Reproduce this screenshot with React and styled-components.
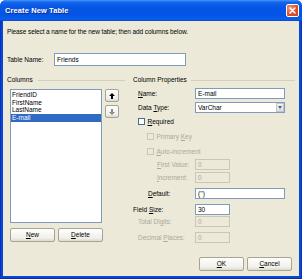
import React from "react";
import styled, { createGlobalStyle } from "styled-components";

const Global = createGlobalStyle`
  html, body { margin: 0; padding: 0; background: #fff; }
  body { font-family: "Liberation Sans", Arial, sans-serif; }
`;

const Window = styled.div`
  width: 302px;
  height: 279px;
  display: flex;
  flex-direction: column;
  background: #0846D8;
  border-radius: 6px 6px 0 0;
  overflow: hidden;
`;

const TitleBar = styled.div`
  height: 21px;
  flex: none;
  display: flex;
  align-items: center;
  justify-content: space-between;
  padding: 0 3px 0 5px;
  background: linear-gradient(to bottom, #4A96FA 0%, #1466EE 10%, #0556E4 35%, #0455E6 75%, #0A5FEE 90%, #0848D4 100%);
`;

const Title = styled.span`
  color: #fff;
  font-weight: bold;
  font-size: 7.5px;
  letter-spacing: 0.1px;
  text-shadow: 1px 1px 0 #0A2A8A;
`;

const CloseButton = styled.div`
  width: 13px;
  height: 13px;
  box-sizing: border-box;
  border: 1px solid #fff;
  border-radius: 2px;
  background: radial-gradient(circle at 30% 30%, #F29A78, #E0512A 55%, #C13A18);
  display: flex;
  align-items: center;
  justify-content: center;
`;

const Frame = styled.div`
  flex: 1;
  display: flex;
  padding: 0 3px 3px 3px;
  box-shadow: inset 1px 0 0 #0A33B8, inset -1px 0 0 #0A33B8, inset 0 -1px 0 #0A2C9E;
`;

const Body = styled.div`
  flex: 1;
  background: #ECE9D8;
  padding: 7px 4px 0 4px;
  display: flex;
  flex-direction: column;
  font-size: 6.5px;
  line-height: 8px;
  color: #000;
  white-space: nowrap;
`;

const Intro = styled.div`
  height: 8px;
  letter-spacing: -0.1px;
`;

const TableNameRow = styled.div`
  margin-top: 17px;
  display: flex;
  align-items: center;
`;

const Label = styled.span`
  color: ${(p) => (p.$disabled ? "#ACA899" : "#000")};
  padding-left: ${(p) => p.$indent || 0}px;
  width: ${(p) => (p.$width ? p.$width + "px" : "auto")};
  box-sizing: border-box;
  flex: none;
`;

const TextBox = styled.div`
  width: ${(p) => p.$width}px;
  height: ${(p) => p.$height || 11}px;
  box-sizing: border-box;
  border: 1px solid ${(p) => (p.$disabled ? "#C9C7BA" : "#7F9DB9")};
  background: ${(p) => (p.$disabled ? "#ECE9D8" : "#fff")};
  color: ${(p) => (p.$disabled ? "#ACA899" : "#000")};
  padding-left: 2px;
  display: flex;
  align-items: center;
  flex: none;
`;

const Main = styled.div`
  margin-top: 10px;
  display: flex;
  gap: 8px;
`;

const LeftColumn = styled.div`
  width: 118px;
  display: flex;
  flex-direction: column;
`;

const RightColumn = styled.div`
  width: 162px;
  display: flex;
  flex-direction: column;
`;

const GroupHeader = styled.div`
  display: flex;
  align-items: center;
  height: 8px;
  &::after {
    content: "";
    flex: 1;
    margin-left: ${(p) => p.$gap || 4}px;
    border-top: 1px solid #D0D0BF;
  }
`;

const ListRow = styled.div`
  margin-top: 5px;
  padding-left: 3px;
  display: flex;
  gap: 3px;
`;

const ListBox = styled.div`
  width: 92px;
  height: 134px;
  box-sizing: border-box;
  border: 1px solid #7F9DB9;
  background: #fff;
  padding-top: 1px;
  display: flex;
  flex-direction: column;
`;

const ListItem = styled.div`
  height: 7.7px;
  line-height: 7.7px;
  padding-left: 1px;
  background: ${(p) => (p.$selected ? "#316AC5" : "transparent")};
  color: ${(p) => (p.$selected ? "#fff" : "#000")};
`;

const ArrowColumn = styled.div`
  display: flex;
  flex-direction: column;
  gap: 3px;
`;

const IconButton = styled.div`
  width: 14px;
  height: 13px;
  box-sizing: border-box;
  border: 1px solid #A5A497;
  border-radius: 2px;
  background: linear-gradient(to bottom, #FEFEFC, #F1F0EA 75%, #DCD9CC);
  display: flex;
  align-items: center;
  justify-content: center;
`;

const ButtonRow = styled.div`
  margin-top: ${(p) => p.$mt || 0}px;
  padding: 0 ${(p) => p.$pr || 0}px 0 ${(p) => p.$pl || 0}px;
  display: flex;
  gap: 3px;
  justify-content: ${(p) => (p.$right ? "flex-end" : "flex-start")};
`;

const Button = styled.div`
  width: 45px;
  height: 14px;
  box-sizing: border-box;
  border: 1px solid #A5A497;
  border-radius: 2px;
  background: linear-gradient(to bottom, #FEFEFC, #F1F0EA 75%, #DCD9CC);
  display: flex;
  align-items: center;
  justify-content: center;
  color: #000;
`;

const FormRow = styled.div`
  margin-top: ${(p) => p.$mt}px;
  display: flex;
  align-items: center;
`;

const CheckRow = styled.div`
  margin-top: ${(p) => p.$mt}px;
  padding-left: ${(p) => p.$indent}px;
  height: 7px;
  display: flex;
  align-items: center;
  gap: 2.5px;
`;

const CheckBox = styled.div`
  width: 7px;
  height: 7px;
  box-sizing: border-box;
  border: 1px solid ${(p) => (p.$disabled ? "#C9C7BA" : "#4E6A8C")};
  background: ${(p) => (p.$disabled ? "#ECE9D8" : "#fff")};
  flex: none;
`;

const Select = styled.div`
  width: 90px;
  height: 11px;
  box-sizing: border-box;
  border: 1px solid #7F9DB9;
  background: #fff;
  display: flex;
  align-items: center;
  justify-content: space-between;
  padding-left: 2px;
  flex: none;
`;

const DropButton = styled.div`
  width: 8px;
  height: 9px;
  box-sizing: border-box;
  border: 1px solid #C3C6CE;
  background: linear-gradient(to bottom, #F4F4F4, #DCDCDC);
  display: flex;
  align-items: center;
  justify-content: center;
`;

const U = styled.span`
  text-decoration: underline;
`;

const LABEL_W = 62;

function Field({ label, indent, value, width, disabled, mt }) {
  return (
    <FormRow $mt={mt}>
      <Label $indent={indent} $width={LABEL_W} $disabled={disabled}>
        {label}
      </Label>
      <TextBox $width={width} $disabled={disabled}>
        {value}
      </TextBox>
    </FormRow>
  );
}

export default function App() {
  return (
    <>
      <Global />
      <Window>
        <TitleBar>
          <Title>Create New Table</Title>
          <CloseButton>
            <svg width="7" height="7" viewBox="0 0 7 7">
              <path d="M1 1 L6 6 M6 1 L1 6" stroke="#fff" strokeWidth="1.5" strokeLinecap="round" />
            </svg>
          </CloseButton>
        </TitleBar>
        <Frame>
          <Body>
            <Intro>Please select a name for the new table; then add columns below.</Intro>
            <TableNameRow>
              <Label $width={47}>Table Name:</Label>
              <TextBox $width={132} $height={13}>Friends</TextBox>
            </TableNameRow>
            <Main>
              <LeftColumn>
                <GroupHeader $gap={5}>Columns</GroupHeader>
                <ListRow>
                  <ListBox>
                    <ListItem>FriendID</ListItem>
                    <ListItem>FirstName</ListItem>
                    <ListItem>LastName</ListItem>
                    <ListItem $selected>E-mail</ListItem>
                  </ListBox>
                  <ArrowColumn>
                    <IconButton>
                      <svg width="6" height="6" viewBox="0 0 6 6">
                        <path d="M3 0 L6 3 L4 3 L4 6 L2 6 L2 3 L0 3 Z" fill="#000" />
                      </svg>
                    </IconButton>
                    <IconButton>
                      <svg width="6" height="6" viewBox="0 0 6 6">
                        <path d="M3 6 L6 3 L4 3 L4 0 L2 0 L2 3 L0 3 Z" fill="#8E8D86" />
                      </svg>
                    </IconButton>
                  </ArrowColumn>
                </ListRow>
                <ButtonRow $mt={5} $pl={3}>
                  <Button><U>N</U>ew</Button>
                  <Button><U>D</U>elete</Button>
                </ButtonRow>
              </LeftColumn>
              <RightColumn>
                <GroupHeader>Column Properties</GroupHeader>
                <Field mt={4} indent={5} width={90} label={<><U>N</U>ame:</>} value="E-mail" />
                <FormRow $mt={3}>
                  <Label $indent={5} $width={LABEL_W}>Data <U>T</U>ype:</Label>
                  <Select>
                    VarChar
                    <DropButton>
                      <svg width="4" height="3" viewBox="0 0 4 3">
                        <path d="M0 0 L4 0 L2 3 Z" fill="#4D6185" />
                      </svg>
                    </DropButton>
                  </Select>
                </FormRow>
                <CheckRow $mt={5} $indent={5}>
                  <CheckBox />
                  <Label><U>R</U>equired</Label>
                </CheckRow>
                <CheckRow $mt={8} $indent={14}>
                  <CheckBox $disabled />
                  <Label $disabled>Primary <U>K</U>ey</Label>
                </CheckRow>
                <CheckRow $mt={8} $indent={14}>
                  <CheckBox $disabled />
                  <Label $disabled><U>A</U>uto-increment</Label>
                </CheckRow>
                <Field mt={4} indent={24} width={35} disabled label={<><U>F</U>irst Value:</>} value="0" />
                <Field mt={2} indent={24} width={35} disabled label={<><U>I</U>ncrement:</>} value="0" />
                <Field mt={5} indent={15} width={90} label={<><U>D</U>efault:</>} value="('')" />
                <Field mt={5} indent={0} width={35} label={<>Field <U>S</U>ize:</>} value="30" />
                <Field mt={1} indent={5} width={35} disabled label={<>Total Di<U>g</U>its:</>} value="0" />
                <Field mt={5} indent={5} width={35} disabled label={<>Decimal <U>P</U>laces:</>} value="0" />
              </RightColumn>
            </Main>
            <ButtonRow $mt={14} $pr={3} $right>
              <Button><U>O</U>K</Button>
              <Button><U>C</U>ancel</Button>
            </ButtonRow>
          </Body>
        </Frame>
      </Window>
    </>
  );
}
